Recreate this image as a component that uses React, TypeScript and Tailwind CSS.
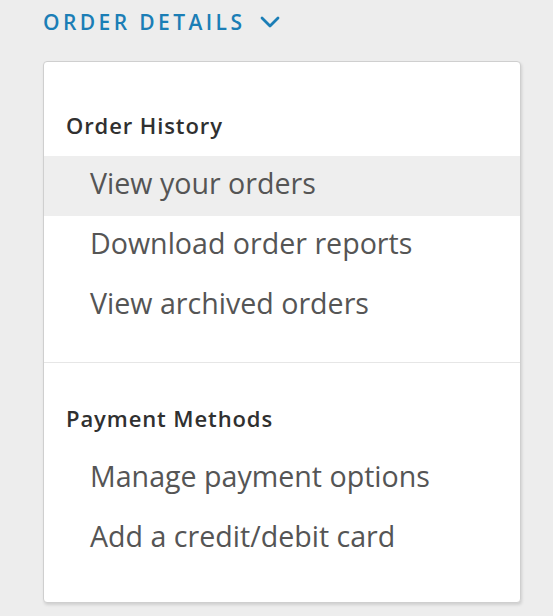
const sections = [
  {
    title: "Order History",
    links: ["View your orders", "Download order reports", "View archived orders"],
  },
  {
    title: "Payment Methods",
    links: ["Manage payment options", "Add a credit/debit card"],
  },
];

export default function App() {
  return (
    <div className="min-h-screen bg-[#ededed] font-['Open_Sans',sans-serif]">
      {/* dropdown trigger */}
      <button className="ml-[43px] pt-[7px] flex items-center h-[37px] text-[#1b7eb6]">
        <span className="text-[21px] leading-[30px] font-semibold tracking-[3.4px]">ORDER DETAILS</span>
        <svg className="ml-[15px] w-[20px] h-[12px]" viewBox="0 0 20 12" fill="none">
          <path d="M2 2l8 8 8-8" stroke="currentColor" strokeWidth="2.8" strokeLinecap="round" strokeLinejoin="round" />
        </svg>
      </button>

      {/* menu panel */}
      <div className="ml-[43px] mt-[24px] w-[478px] bg-white border border-[#cfcfcf] rounded-[4px] shadow-[1px_2px_3px_rgba(0,0,0,0.12)]">
        {sections.map((s, i) => (
          <div
            key={s.title}
            className={i === 0 ? "pt-[48px] pb-[26px] border-b border-[#e6e6e6]" : "pt-[40px] pb-[33px]"}
          >
            <h3 className="pl-[22px] h-[30px] leading-[30px] mb-[16px] text-[22px] font-semibold tracking-[0.9px] text-[#303030]">
              {s.title}
            </h3>
            <ul>
              {s.links.map((l, j) => (
                <li
                  key={l}
                  className={`h-[60px] flex items-center pb-[6px] pl-[46px] text-[28.6px] text-[#555555] ${
                    i === 0 && j === 0 ? "bg-[#eeeeee]" : ""
                  }`}
                >
                  {l}
                </li>
              ))}
            </ul>
          </div>
        ))}
      </div>
    </div>
  );
}
